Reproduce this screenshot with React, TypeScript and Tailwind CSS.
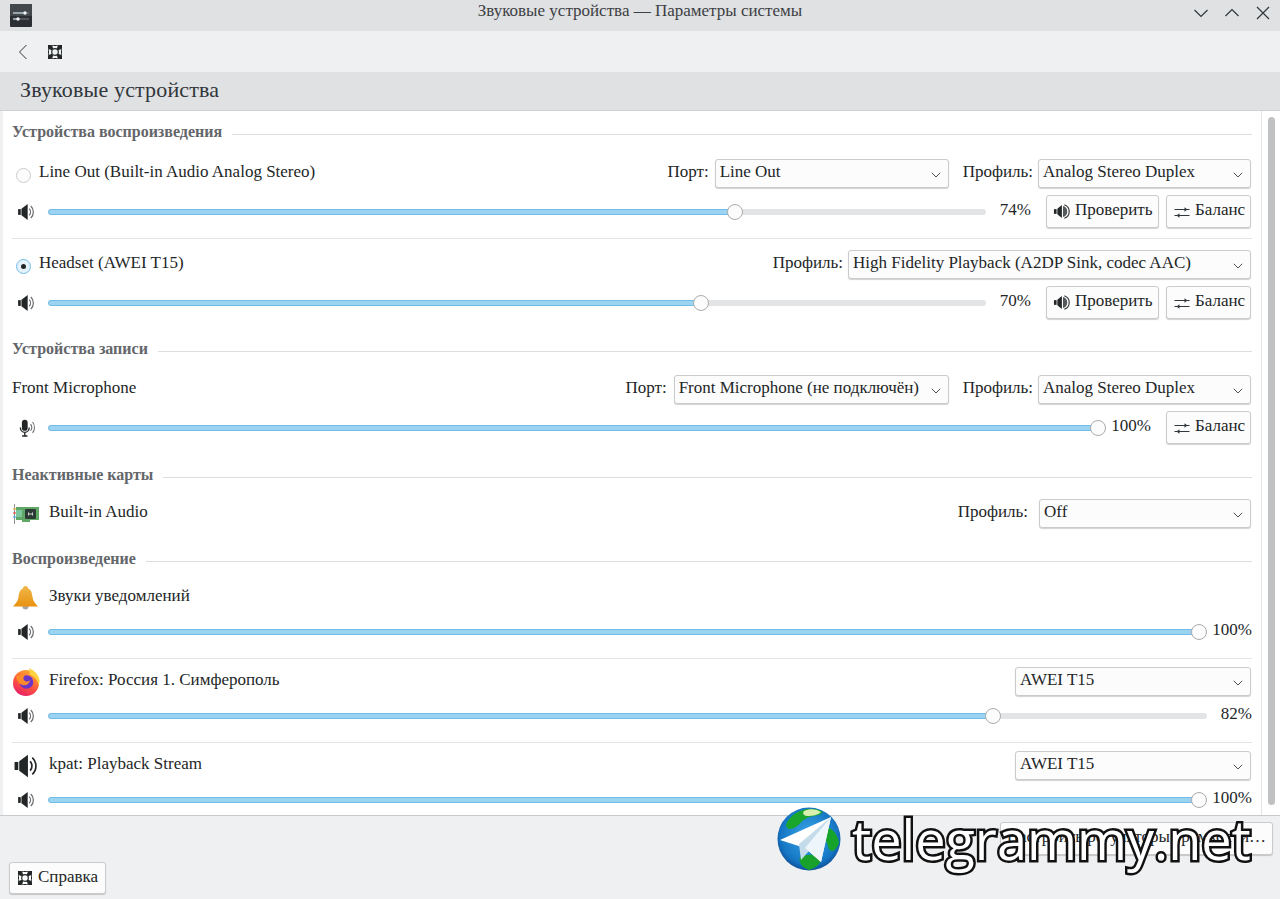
import type { ReactNode } from "react";

const INK = "#232627";

function SpeakerIcon({ size = 20, arc = "#6b6e70" }: { size?: number; arc?: string }) {
  return (
    <svg width={size} height={size} viewBox="0 0 18 18" className="shrink-0">
      <rect x="1" y="6.4" width="2.4" height="5.2" fill={INK} />
      <path d="M4 6 9.600 1.800v14.400L4 12z" fill={INK} />
      <path d="M11 6a4.400 4.400 0 0 1 0 6M12.400 3.600a7.400 7.400 0 0 1 0 10.800" fill="none" stroke={arc} strokeWidth="1.100" />
    </svg>
  );
}

function MicIcon() {
  return (
    <svg width="20" height="20" viewBox="0 0 18 18" className="shrink-0">
      <rect x="4.400" y="1.500" width="5.200" height="10" rx="2.600" fill={INK} />
      <path d="M3 8.500a4 4.400 0 0 0 8 0M7 13v3M4.600 16.200h4.800" fill="none" stroke={INK} strokeWidth="1.200" />
      <path d="M12.200 5.500a5 5 0 0 1 0 6M14 3.600a8 8 0 0 1 0 9.800" fill="none" stroke="#6b6e70" strokeWidth="1" />
    </svg>
  );
}

function TestIcon() {
  return (
    <svg width="17" height="17" viewBox="0 0 18 18" className="shrink-0">
      <rect x="1" y="6.500" width="2.800" height="5" fill={INK} />
      <path d="M4.600 6 9.400 2v14L4.600 12z" fill={INK} />
      <path d="M10.600 3.200a6 6 0 0 1 0 11.600z" fill="#55585a" />
      <path d="M12 1.800a7.600 7.600 0 0 1 0 14.400" fill="none" stroke="#2f3234" strokeWidth="1.200" />
    </svg>
  );
}

function BalanceIcon() {
  return (
    <svg width="16" height="16" viewBox="0 0 16 16" className="shrink-0">
      <path d="M0.500 5.500h15M0.500 11.500h15" stroke="#31363b" strokeWidth="1" />
      <path d="M10.500 3.200l3 2.300-3 2.300zM5.500 9.200l-3 2.300 3 2.300z" fill="#31363b" />
    </svg>
  );
}

function HelpIcon() {
  return (
    <svg width="16" height="16" viewBox="0 0 16 16" className="shrink-0">
      <rect x="1.500" y="1.500" width="13" height="13" rx="5" fill="none" stroke={INK} strokeWidth="1" />
      <circle cx="8" cy="8" r="3.300" fill="none" stroke={INK} strokeWidth="1.200" />
      <path d="M1 1h3.500l1.800 3.600-1.700 1.700L1 4.500zM15 1h-3.500L9.700 4.600l1.700 1.700L15 4.500zM1 15h3.500l1.800-3.600-1.700-1.700L1 11.500zM15 15h-3.500l-1.800-3.600 1.700-1.700 3.600 1.800z" fill={INK} />
    </svg>
  );
}

function Chevron() {
  return (
    <svg width="10" height="6" viewBox="0 0 10 6" className="shrink-0">
      <path d="M0.800 0.800 5 5l4.200-4.200" fill="none" stroke="#4d5053" strokeWidth="1" />
    </svg>
  );
}

function AppIcon() {
  return (
    <svg width="22" height="23" viewBox="0 0 22 23">
      <rect width="22" height="23" rx="1" fill="#2b2f33" />
      <rect width="22" height="12" rx="1" fill="#43484d" />
      <path d="M3 9h16M3 15h16" stroke="#7d8286" strokeWidth="1" />
      <path d="M3 9h11M3 15h5" stroke="#cfe6f5" strokeWidth="1" />
      <circle cx="15" cy="9" r="1.700" fill="#f2f4f5" />
      <circle cx="8" cy="15" r="1.700" fill="#f2f4f5" />
    </svg>
  );
}

function CardIcon() {
  return (
    <svg width="26" height="22" viewBox="0 0 26 22" className="shrink-0">
      <rect x="1" y="1" width="1" height="20" fill="#8c9296" />
      <rect x="0.500" y="5" width="2" height="2" fill="#d9a53a" />
      <rect x="0.500" y="9" width="2" height="2" fill="#d8503f" />
      <rect x="0.500" y="13" width="2" height="2" fill="#4aa0d8" />
      <path d="M3 4h23v13H17v2H9v-2H3z" fill="#5fa866" />
      <rect x="3" y="7" width="6" height="7" fill="#7dc7a0" />
      <rect x="12" y="6" width="11" height="10" rx="1" fill="#2c3a36" />
      <path d="M15.500 9.500v3M19.500 9.500v3M15.500 11h4" stroke="#cfd6d3" strokeWidth="1" />
    </svg>
  );
}

function BellIcon() {
  return (
    <svg width="27" height="26" viewBox="0 0 26 26" className="shrink-0">
      <defs>
        <linearGradient id="bell" x1="0" y1="0" x2="0" y2="1">
          <stop offset="0" stopColor="#f0b84a" />
          <stop offset="1" stopColor="#e8920f" />
        </linearGradient>
      </defs>
      <circle cx="13" cy="21.500" r="3" fill="#a8a6a0" />
      <path d="M13 1c1.600 0 2.400 1 2.600 2.400C18.800 4.600 19.600 8 20 12c.4 3.600 2.200 6 5.500 9.500H.5C3.800 18 5.600 15.600 6 12c.4-4 1.200-7.400 4.400-8.600C10.600 2 11.400 1 13 1z" fill="url(#bell)" />
    </svg>
  );
}

function FirefoxIcon() {
  return (
    <svg width="28" height="28" viewBox="0 0 28 28" className="shrink-0">
      <defs>
        <linearGradient id="ff" x1="0.700" y1="0" x2="0.200" y2="1">
          <stop offset="0" stopColor="#ffb02e" />
          <stop offset="0.500" stopColor="#ff5a3c" />
          <stop offset="1" stopColor="#e6176c" />
        </linearGradient>
      </defs>
      <circle cx="14" cy="15" r="13" fill="url(#ff)" />
      <path d="M17 0c3 1.500 8 4.500 10 10 1 3 .5 5-.5 7-.5-4-3-8-9-10.500C18 5 18 3 17 0z" fill="#ffd23f" />
      <circle cx="14.500" cy="14" r="6.800" fill="#6a36c9" />
      <path d="M4 9c2-2 6-3 9-1.500-2 1.500-2 3-1 4.500 2 2.500 5 1.500 6 0-.5 4-4 6-7.500 5C7 16 5 12.500 4 9z" fill="#ff8a2a" />
    </svg>
  );
}

function GlobeMark() {
  return (
    <svg width="64" height="64" viewBox="0 0 64 64" className="shrink-0">
      <defs>
        <radialGradient id="globe" cx="0.500" cy="0.450" r="0.600">
          <stop offset="0" stopColor="#3aa8e8" />
          <stop offset="0.750" stopColor="#1576c4" />
          <stop offset="1" stopColor="#0b3f86" />
        </radialGradient>
      </defs>
      <circle cx="32" cy="32" r="31.500" fill="url(#globe)" />
      <path d="M14 10C22 2 36-1 46 5c-4 5-12 3-18 7-6 4-8 10-16 10-5-2-3-7 2-12z" fill="#1aa52c" />
      <path d="M27 4c6-3 13-2 17 1-3 3-8 4-14 4-3 0-5-3-3-5z" fill="#d9efb0" />
      <path d="M50 20c6 2 11 8 12 16-3 8-8 10-10 6-2-5-6-16-2-22z" fill="#16a32a" />
      <path d="M23 50c6-3 14-3 21 0 1 5-4 11-12 13-6-2-11-7-9-13z" fill="#18a22b" />
      <path d="M3 33 54 10 44 55 28 41z" fill="#ffffff" />
      <path d="M54 10 22 37 24 53 32 44z" fill="#c4dcea" />
      <path d="M54 10 28 41 44 55z" fill="#eef6fb" />
    </svg>
  );
}

function Button({ icon, label, className }: { icon: ReactNode; label: string; className: string }) {
  return (
    <div className={`flex items-center rounded-[3px] border border-[#c9cbcd] bg-[#fcfcfc] shadow-[0_1px_1px_rgba(0,0,0,0.18)] ${className}`}>
      {icon}
      <span className="ml-[5px] pb-[3px] text-[17px] text-[#232627]">{label}</span>
    </div>
  );
}

function Combo({ value, className }: { value: string; className: string }) {
  return (
    <div className={`flex h-[29px] shrink-0 items-center justify-between rounded-[3px] border border-[#c9cbcd] bg-[#fcfcfc] pl-[4px] pr-[7px] shadow-[0_1px_1px_rgba(0,0,0,0.18)] ${className}`}>
      <span className="pb-[4px] text-[17px] text-[#232627]">{value}</span>
      <span className="pt-[3px]">
        <Chevron />
      </span>
    </div>
  );
}

function Field({ label, value, className }: { label: string; value: string; className: string }) {
  return (
    <>
      <span className="pb-[4px] text-[17px] text-[#232627]">{label}</span>
      <Combo value={value} className={className} />
    </>
  );
}

function Slider({ pos }: { pos: number }) {
  // handle centre travels between the ends of the track, minus its own width
  return (
    <div className="relative h-[6px] flex-1 rounded-full bg-[#e3e4e5]">
      <div
        className="h-full rounded-full border border-[#6fbde8] bg-[#9bd3f0]"
        style={{ width: `calc(${pos}% + 8px - ${(pos / 100) * 16}px)` }}
      />
      <div
        className="absolute top-[-5px] size-[16px] rounded-full border border-[#a9abad] bg-[#fcfcfc]"
        style={{ left: `calc(${pos}% - ${(pos / 100) * 16}px)` }}
      />
    </div>
  );
}

function SliderRow({
  pos,
  label,
  icon,
  className,
  children,
}: {
  pos: number;
  label: string;
  icon?: ReactNode;
  className: string;
  children?: ReactNode;
}) {
  return (
    <div className={`flex items-center ${className}`}>
      <div className="flex w-[36px] shrink-0 pl-[5px]">{icon ?? <SpeakerIcon />}</div>
      <Slider pos={pos} />
      <span className="w-[45px] shrink-0 pb-[4px] text-right text-[17px] text-[#232627]">{label}</span>
      {children && <div className="ml-[15px] mr-px flex gap-[7px]">{children}</div>}
    </div>
  );
}

function Section({ title, className }: { title: string; className: string }) {
  return (
    <div className={`flex h-[24px] items-center gap-[10px] ${className}`}>
      <span className="pb-[3px] text-[16px] font-bold text-[#63666a]">{title}</span>
      <div className="mt-[3px] h-px flex-1 bg-[#dcdddf]" />
    </div>
  );
}

function Radio({ checked }: { checked?: boolean }) {
  return checked ? (
    <div className="ml-[4px] mt-[3px] flex size-[15px] shrink-0 items-center justify-center rounded-full border border-[#74bdea] bg-[#e4f2fb]">
      <div className="size-[5px] rounded-full bg-[#232627]" />
    </div>
  ) : (
    <div className="ml-[4px] mt-[3px] size-[15px] shrink-0 rounded-full border border-[#c9cbcd] bg-[#fcfcfc]" />
  );
}

const Test = () => <Button icon={<TestIcon />} label="Проверить" className="h-[33px] w-[113px] pl-[6px]" />;
const Balance = () => <Button icon={<BalanceIcon />} label="Баланс" className="h-[33px] w-[85px] pl-[7px]" />;

export default function App() {
  return (
    <div className="relative flex h-[899px] w-[1280px] flex-col overflow-hidden bg-[#eff0f1] font-['Liberation_Serif',serif]">
      {/* title bar */}
      <div className="flex h-[31px] shrink-0 items-center bg-[#dfe1e3]">
        <div className="flex w-[87px] pl-[10px]">
          <AppIcon />
        </div>
        <span className="flex-1 pb-[9px] text-center text-[17px] text-[#3d4043]">Звуковые устройства — Параметры системы</span>
        <div className="flex w-[87px] items-center justify-end gap-[15px] pr-[9px] pb-[5px]">
          <svg width="16" height="16" viewBox="0 0 16 16" className="shrink-0"><path d="M1.500 5 8 11.500 14.500 5" fill="none" stroke="#31363b" strokeWidth="1.200" /></svg>
          <svg width="16" height="16" viewBox="0 0 16 16" className="shrink-0"><path d="M1.500 11 8 4.500 14.500 11" fill="none" stroke="#31363b" strokeWidth="1.200" /></svg>
          <svg width="16" height="16" viewBox="0 0 16 16" className="shrink-0"><path d="M2 2l12 12M14 2 2 14" fill="none" stroke="#31363b" strokeWidth="1.200" /></svg>
        </div>
      </div>

      {/* toolbar */}
      <div className="ml-[3px] flex h-[41px] shrink-0 items-center gap-[19px] pl-[15px]">
        <svg width="10" height="16" viewBox="0 0 10 16"><path d="M8.500 1 1.500 8l7 7" fill="none" stroke="#31363b" strokeWidth="1" /></svg>
        <HelpIcon />
      </div>

      {/* page header */}
      <div className="flex h-[39px] shrink-0 items-center border-b border-[#cfd1d3] bg-[#dfe1e3] pl-[20px]">
        <span className="pb-[3px] text-[22px] tracking-[0.15px] text-[#31363b]">Звуковые устройства</span>
      </div>

      {/* content + scrollbar */}
      <div className="ml-[3px] flex h-[704px] shrink-0 bg-white">
        <div className="flex w-[1258px] shrink-0 flex-col pl-[9px] pr-[9px] pt-[10px]">
          <Section title="Устройства воспроизведения" className="" />

          <div className="mt-[14px] flex h-[29px] items-center">
            <Radio />
            <span className="ml-[8px] flex-1 pb-[4px] text-[17px] text-[#232627]">Line Out (Built-in Audio Analog Stereo)</span>
            <Field label="Порт:" value="Line Out" className="ml-[6px] w-[234px]" />
            <span className="w-[14px]" />
            <Field label="Профиль:" value="Analog Stereo Duplex" className="ml-[5px] mr-px w-[213px]" />
          </div>
          <SliderRow pos={73.6} label="74%" className="mt-[7px] h-[33px]">
            <Test />
            <Balance />
          </SliderRow>
          <div className="mt-[10px] h-px bg-[#e4e5e6]" />

          <div className="mt-[11px] flex h-[29px] items-center">
            <Radio checked />
            <span className="ml-[8px] flex-1 pb-[4px] text-[17px] text-[#232627]">Headset (AWEI T15)</span>
            <Field label="Профиль:" value="High Fidelity Playback (A2DP Sink, codec AAC)" className="ml-[5px] mr-px w-[403px]" />
          </div>
          <SliderRow pos={70} label="70%" className="mt-[7px] h-[33px]">
            <Test />
            <Balance />
          </SliderRow>

          <Section title="Устройства записи" className="mt-[19px]" />
          <div className="mt-[13px] flex h-[29px] items-center">
            <span className="flex-1 pb-[4px] text-[17px] text-[#232627]">Front Microphone</span>
            <Field label="Порт:" value="Front Microphone (не подключён)" className="ml-[7px] w-[275px]" />
            <span className="w-[14px]" />
            <Field label="Профиль:" value="Analog Stereo Duplex" className="ml-[5px] mr-px w-[213px]" />
          </div>
          <SliderRow pos={100} label="100%" icon={<MicIcon />} className="mt-[7px] h-[33px]">
            <Balance />
          </SliderRow>

          <Section title="Неактивные карты" className="mt-[20px]" />
          <div className="mt-[11px] flex h-[29px] items-center">
            <span className="ml-px"><CardIcon /></span>
            <span className="ml-[10px] flex-1 pb-[4px] text-[17px] text-[#232627]">Built-in Audio</span>
            <Field label="Профиль:" value="Off" className="ml-[11px] mr-px w-[212px]" />
          </div>

          <Section title="Воспроизведение" className="mt-[20px]" />
          <div className="mt-[11px] flex h-[29px] items-center">
            <BellIcon />
            <span className="ml-[10px] pb-[4px] text-[17px] text-[#232627]">Звуки уведомлений</span>
          </div>
          <SliderRow pos={100} label="100%" className="mt-[8px] h-[24px]" />
          <div className="mt-[14px] h-px bg-[#e4e5e6]" />

          <div className="mt-[8px] flex h-[29px] items-center">
            <FirefoxIcon />
            <span className="ml-[9px] flex-1 pb-[4px] text-[17px] text-[#232627]">Firefox: Россия 1. Симферополь</span>
            <Combo value="AWEI T15" className="mr-px w-[236px]" />
          </div>
          <SliderRow pos={82} label="82%" className="mt-[8px] h-[24px]" />
          <div className="mt-[14px] h-px bg-[#e4e5e6]" />

          <div className="mt-[8px] flex h-[29px] items-center">
            <span className="ml-px"><SpeakerIcon size={28} arc={INK} /></span>
            <span className="ml-[8px] flex-1 pb-[4px] text-[17px] text-[#232627]">kpat: Playback Stream</span>
            <Combo value="AWEI T15" className="mr-px w-[236px]" />
          </div>
          <SliderRow pos={100} label="100%" className="mt-[8px] h-[24px]" />
        </div>

        {/* scrollbar */}
        <div className="flex flex-1 border-l border-[#e3e4e5] pl-[6px] pt-[6px] pb-[10px]">
          <div className="w-[7px] rounded-full bg-[#bfc1c3]" />
        </div>
      </div>

      {/* footer */}
      <div className="flex flex-1 flex-col border-t border-[#c8cacc] pl-[9px] pr-[7px] pt-[6px]">
        <div className="flex justify-end">
          <div className="flex h-[33px] items-center rounded-[3px] border border-[#c9cbcd] bg-[#fcfcfc] px-[6px] shadow-[0_1px_1px_rgba(0,0,0,0.18)]">
            <span className="pb-[3px] text-[17px] text-[#232627]">Настроить регуляторы громкости…</span>
          </div>
        </div>
        <div className="mt-[7px]">
          <Button icon={<HelpIcon />} label="Справка" className="h-[32px] w-[97px] pl-[7px]" />
        </div>
      </div>

      {/* watermark */}
      <div className="absolute left-[777px] top-[807px] flex items-center gap-[11px]">
        <GlobeMark />
        <span className="font-['Open_Sans',sans-serif] text-[54px] leading-none text-white [-webkit-text-stroke:5px_#111] [paint-order:stroke_fill]">
          telegrammy.net
        </span>
      </div>
    </div>
  );
}
